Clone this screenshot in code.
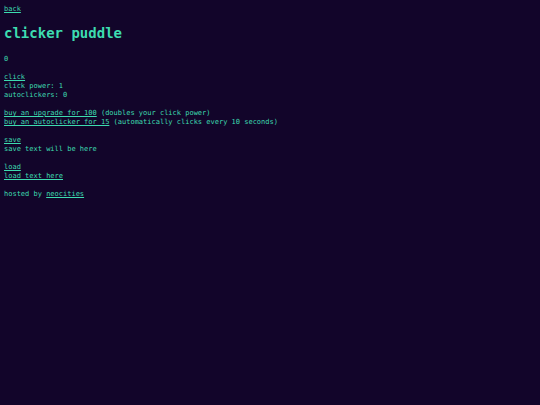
import React from 'react'

const App: React.FC = () => {
  return (
    <div className="min-h-[405px] w-full bg-[#12052a] px-[4px] pt-[5px] text-[7px] leading-[9px] text-[#3ddcb0] font-['DejaVu_Sans_Mono',monospace]">
      <p className="mb-[9px]">
        <a href="#" className="underline">back</a>
      </p>
      <h1 className="mb-[13px] mt-[11px] text-[14px] font-bold leading-[17px]">clicker puddle</h1>
      <p className="mb-[9px]">0</p>
      <p className="mb-[9px]">
        <a href="#" className="underline">click</a>
        <br />
        click power: 1
        <br />
        autoclickers: 0
      </p>
      <p className="mb-[9px]">
        <a href="#" className="underline">buy an upgrade for 100</a> (doubles your click power)
        <br />
        <a href="#" className="underline">buy an autoclicker for 15</a> (automatically clicks every 10 seconds)
      </p>
      <p className="mb-[9px]">
        <a href="#" className="underline">save</a>
        <br />
        save text will be here
      </p>
      <p className="mb-[9px]">
        <a href="#" className="underline">load</a>
        <br />
        <a href="#" className="underline">load text here</a>
      </p>
      <p>
        hosted by <a href="#" className="underline">neocities</a>
      </p>
    </div>
  )
}

export default App
